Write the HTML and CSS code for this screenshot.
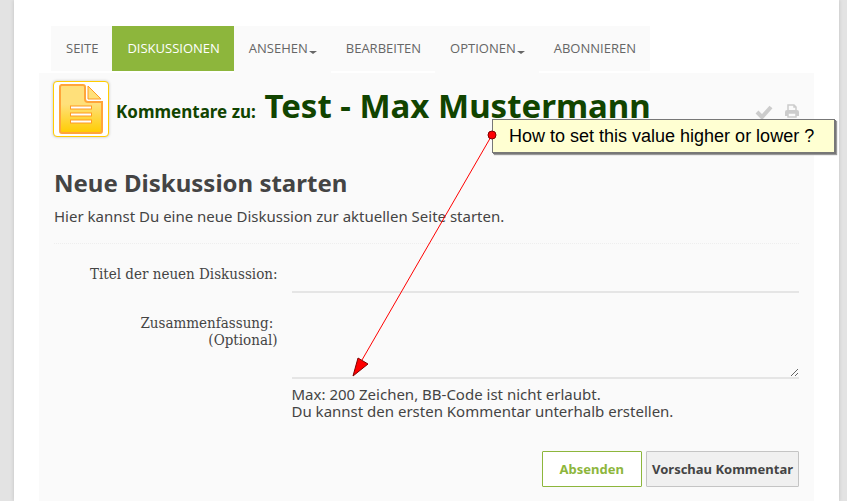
FILE: index.html
```
<!DOCTYPE html>
<html lang="de">
<head>
    <meta charset="utf-8">
    <meta name="viewport" content="width=device-width, initial-scale=1">
    <title>Kommentare zu: Test - Max Mustermann</title>
    <link rel="stylesheet" href="styles.css">
</head>

<body>
    <div class="page">

        <nav class="tabs">
            <a href="#">Seite</a>
            <a href="#" class="active">Diskussionen</a>
            <a href="#" class="dropdown">Ansehen<span class="caret"></span></a>
            <a href="#">Bearbeiten</a>
            <a href="#" class="dropdown">Optionen<span class="caret"></span></a>
            <a href="#">Abonnieren</a>
        </nav>

        <main class="panel">
            <header class="title-bar">
                <span class="page-icon">
                    <svg width="44" height="50" viewBox="0 0 44 50">
                        <defs>
                            <linearGradient id="gold" x1="0" y1="0" x2="0" y2="1">
                                <stop offset="0" stop-color="#ffe07a"/>
                                <stop offset="0.4" stop-color="#ffe07a"/>
                                <stop offset="1" stop-color="#ffcc00"/>
                            </linearGradient>
                        </defs>
                        <path d="M2 1H24Q26 1 26 3V15Q26 18 29 18H43V47Q43 49 41 49H3Q1 49 1 47V3Q1 1 3 1Z" fill="url(#gold)" stroke="#ffa53a" stroke-width="2"/>
                        <path d="M29 2L42 15H29Z" fill="#ffe07a" stroke="#ff9a22"/>
                        <g fill="#fff" stroke="#ff9a22">
                            <rect x="11.500" y="22" width="21" height="3"/>
                            <rect x="11.500" y="29" width="21" height="3"/>
                            <rect x="11.500" y="36" width="21" height="3"/>
                        </g>
                    </svg>
                </span>
                <h1><small>Kommentare zu:</small> Test - Max Mustermann</h1>
                <div class="tools">
                    <button type="button" aria-label="Erledigt">
                        <svg width="18" height="16" viewBox="0 0 18 16"><path d="M2 8L7 13L16 3" fill="none" stroke="#ccc" stroke-width="4"/></svg>
                    </button>
                    <button type="button" aria-label="Drucken">
                        <svg width="14" height="14" viewBox="0 0 14 14" fill="none" stroke="#ccc">
                            <path d="M3 7V1H9L11 3V7M9 1V3H11" stroke-width="1.500"/>
                            <path d="M0 12V8Q0 6 2 6H12Q14 6 14 8V12H11V9H3V12Z" fill="#ccc" stroke="none"/>
                            <path d="M3 9H11V13H3Z" fill="#fafafa" stroke-width="1.500"/>
                        </svg>
                    </button>
                </div>
            </header>

            <section class="discussion">
                <h2>Neue Diskussion starten</h2>
                <p class="intro">Hier kannst Du eine neue Diskussion zur aktuellen Seite starten.</p>

                <form>
                    <div class="row">
                        <label for="title">Titel der neuen Diskussion:</label>
                        <div class="field">
                            <input type="text" id="title" name="title">
                        </div>
                    </div>
                    <div class="row">
                        <label for="summary">Zusammenfassung:&nbsp;<br>(Optional)</label>
                        <div class="field">
                            <textarea id="summary" name="summary" maxlength="200"></textarea>
                            <p class="hint">Max: 200 Zeichen, BB-Code ist nicht erlaubt.<br>Du kannst den ersten Kommentar unterhalb erstellen.</p>
                        </div>
                    </div>
                    <div class="buttons">
                        <button type="submit" class="btn btn-primary">Absenden</button>
                        <button type="button" class="btn">Vorschau Kommentar</button>
                    </div>
                </form>
            </section>
        </main>
    </div>

    <!-- note with arrow, lies over the page -->
    <svg class="arrow" width="150" height="250" viewBox="0 0 150 250">
        <path d="M142 7L12 232" fill="none" stroke="#f00"/>
        <path d="M3 248L8 230L18 236Z" fill="#f00" stroke="#800000"/>
        <circle cx="142" cy="7" r="4" fill="#f00" stroke="#800000"/>
    </svg>
    <div class="note">How to set this value higher or lower ?</div>
</body>
</html>
```
FILE: styles.css
```
* {
    box-sizing: border-box;
}

body {
    margin: 0;
    background-color: #e3e3e3;
    color: #444;
    font-family: 'Noto Sans', sans-serif;
    font-size: 15px;
    line-height: 17px;
    position: relative;
}

.page {
    margin: 0 8px 0 14px;
    padding: 26px 25px 0;
    min-height: 100vh;
    background-color: #fff;
    box-shadow: 0 0 4px rgba(0, 0, 0, 0.15);
}

.tabs {
    display: flex;
    align-items: flex-start;
    margin-left: 12px;
    height: 47px;
}

.tabs a {
    height: 45px;
    padding: 0 14px 0 15px;
    background-color: #fafafa;
    color: #666;
    font-family: 'Open Sans', sans-serif;
    font-size: 13px;
    line-height: 45px;
    text-decoration: none;
    text-transform: uppercase;
}

.tabs .active {
    background-color: #8db63c;
    color: #fff;
}

.tabs .dropdown {
    height: 47px;
}

.caret {
    display: inline-block;
    margin-left: 1px;
    border: 4px solid transparent;
    border-top: 3px solid #666;
    border-bottom: 0;
    vertical-align: -1px;
}

.panel {
    min-height: calc(100vh - 73px);
    padding: 0 15px;
    background-color: #fafafa;
}

.title-bar {
    display: flex;
    padding-top: 8px;
    height: 95px;
}

.page-icon {
    width: 56px;
    height: 56px;
    margin-left: -1px;
    padding: 2px 5px;
    background-color: #fff;
    border: 1px solid #fc0;
    border-radius: 4px;
    box-shadow: 0 0 3px #bbb;
}

.page-icon svg {
    display: block;
}

h1 {
    flex: 1;
    margin: 0 0 0 7px;
    color: #114400;
    font-size: 33px;
    line-height: 50px;
    white-space: nowrap;
}

h1 small {
    font-size: 17px;
}

.tools {
    display: flex;
    align-items: flex-start;
    gap: 12px;
    padding-top: 23px;
}

.tools button {
    padding: 0;
    background: none;
    border: 0;
    cursor: pointer;
}

h2 {
    margin: 0;
    font-size: 24px;
    line-height: 30px;
}

.intro {
    margin: 10px 0 18px;
}

form {
    border-top: 1px dotted #eee;
}

.row {
    display: flex;
    gap: 14px;
}

.row label {
    width: 30%;
    padding-top: 22px;
    font-family: 'Roboto Slab', 'DejaVu Serif Condensed', 'DejaVu Serif', serif;
    text-align: right;
    white-space: nowrap;
}

.field {
    flex: 1;
}

.field input,
.field textarea {
    display: block;
    width: 100%;
    background: none;
    border: 0;
    border-bottom: 2px solid #e5e5e5;
    color: #444;
    font: inherit;
    outline: none;
}

.field input {
    height: 49px;
}

.field textarea {
    height: 76px;
    margin-top: 10px;
    resize: vertical;
}

.hint {
    margin: 7px 0 0;
}

.buttons {
    display: flex;
    justify-content: flex-end;
    gap: 4px;
    margin-top: 31px;
}

.btn {
    height: 36px;
    padding: 0 5px;
    background-color: #f0f0f0;
    border: 1px solid #c4c4c4;
    border-radius: 1px;
    color: #444;
    font-family: 'Noto Sans', sans-serif;
    font-size: 13px;
    font-weight: bold;
    cursor: pointer;
}

.btn-primary {
    padding: 0 17px;
    background-color: #fff;
    border-color: #8db63c;
    color: #8db63c;
}

.arrow {
    position: absolute;
    top: 128px;
    left: 350px;
    z-index: 2;
    pointer-events: none;
}

.note {
    position: absolute;
    top: 119px;
    left: 492px;
    padding: 0 20px 0 16px;
    background-color: #ffffd2;
    border: 1px solid #777;
    box-shadow: 1px 1px 0 #777, 2px 2px 1px #999;
    color: #000;
    font-family: 'Liberation Sans', Arial, sans-serif;
    font-size: 18px;
    line-height: 32px;
    white-space: nowrap;
}
```
